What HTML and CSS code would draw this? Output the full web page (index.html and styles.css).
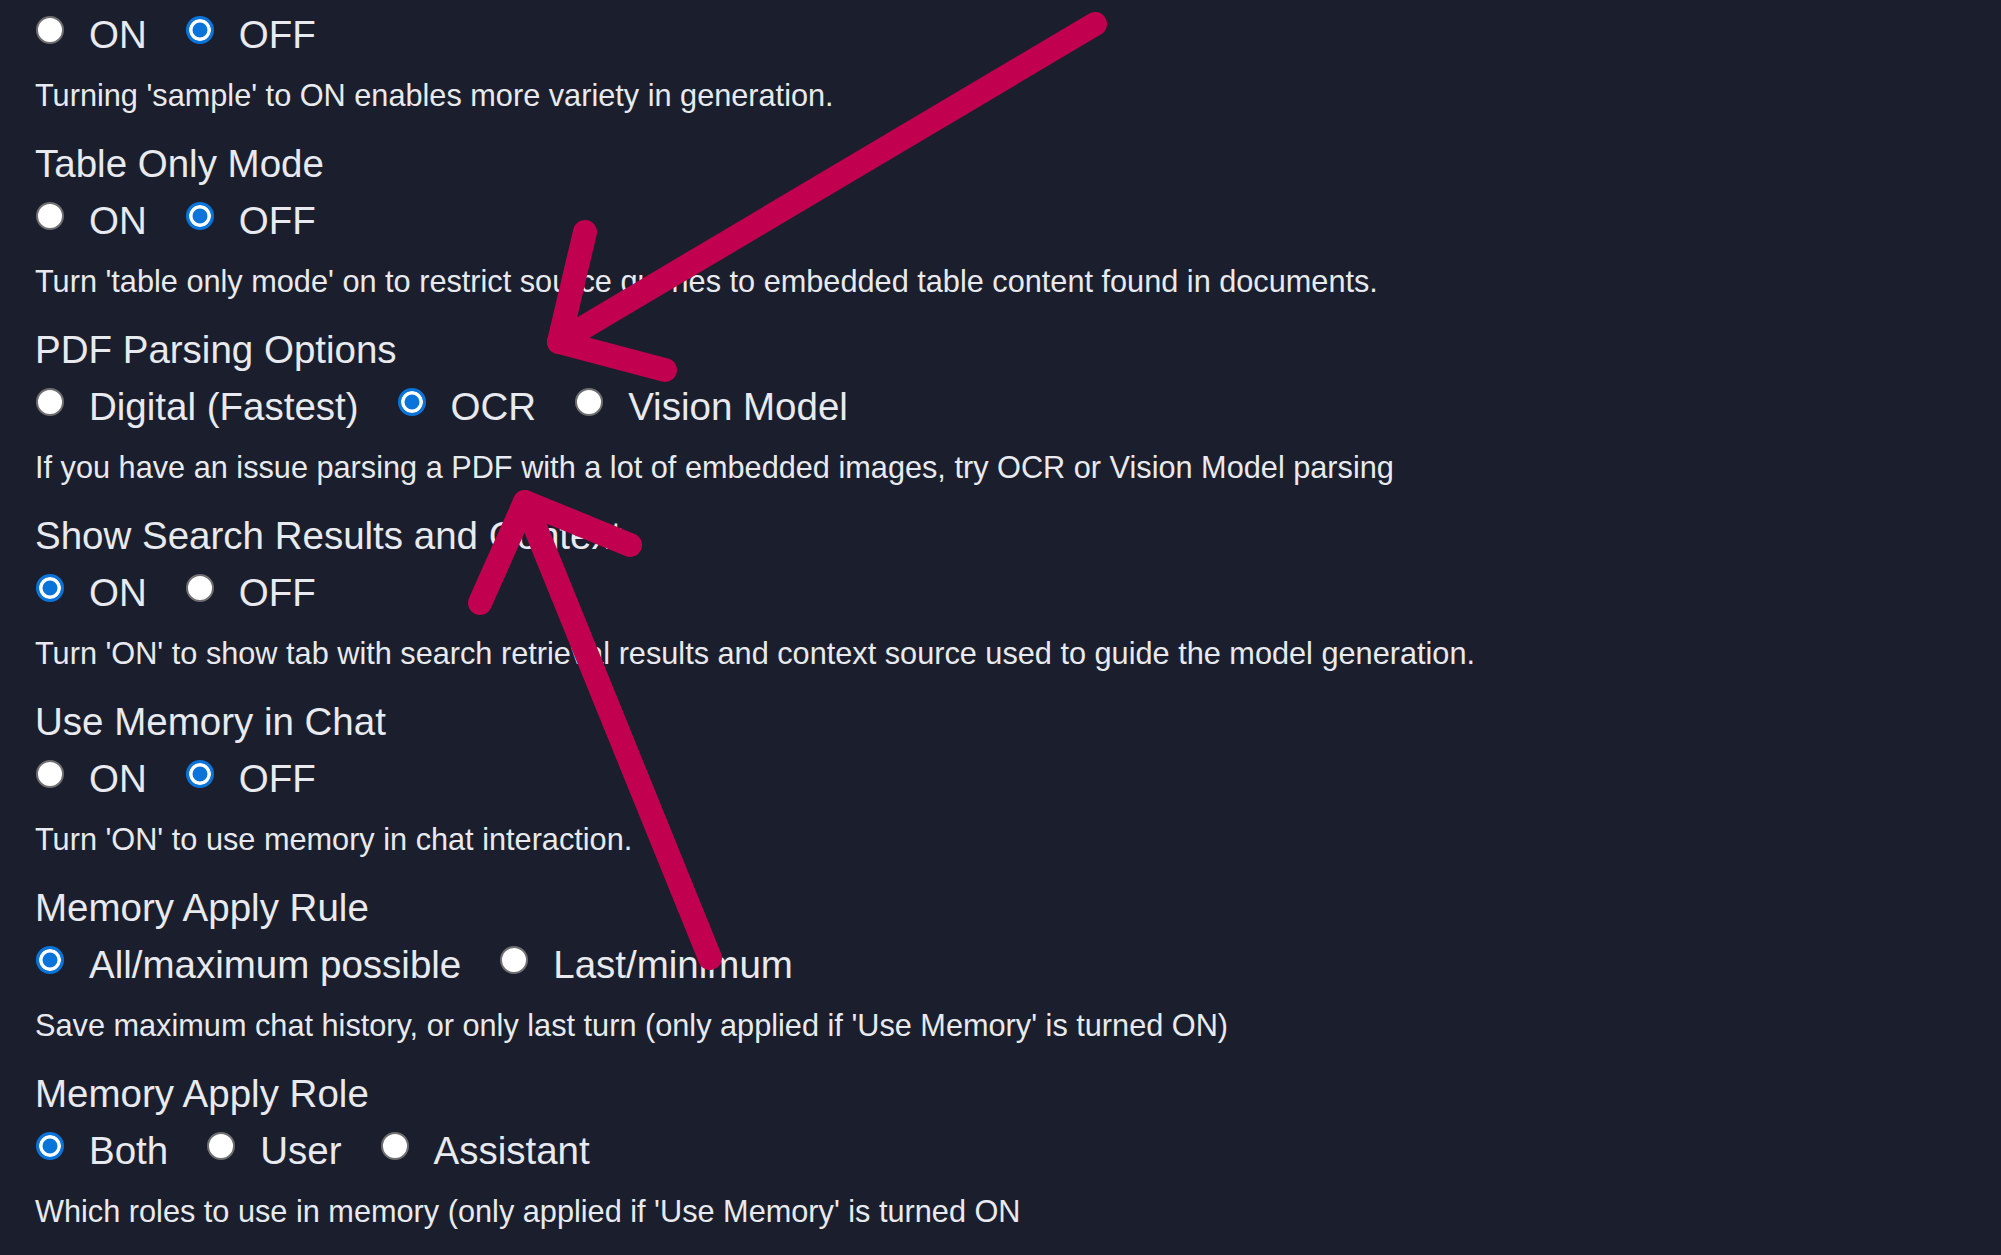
FILE: index.html
```html
<!DOCTYPE html>
<html lang="en">
<head>
<meta charset="utf-8">
<title>Settings</title>
<link rel="stylesheet" href="styles.css">
</head>
<body>
<main class="page">
  <section class="setting setting--continued">
    <div class="options">
      <label class="option"><input type="radio" name="sample"><span>ON</span></label>
      <label class="option"><input type="radio" name="sample" checked><span>OFF</span></label>
    </div>
    <p class="desc">Turning 'sample' to ON enables more variety in generation.</p>
  </section>

  <section class="setting">
    <h3 class="title">Table Only Mode</h3>
    <div class="options">
      <label class="option"><input type="radio" name="table"><span>ON</span></label>
      <label class="option"><input type="radio" name="table" checked><span>OFF</span></label>
    </div>
    <p class="desc">Turn 'table only mode' on to restrict source queries to embedded table content found in documents.</p>
  </section>

  <section class="setting">
    <h3 class="title">PDF Parsing Options</h3>
    <div class="options">
      <label class="option"><input type="radio" name="pdf"><span>Digital (Fastest)</span></label>
      <label class="option"><input type="radio" name="pdf" checked><span>OCR</span></label>
      <label class="option"><input type="radio" name="pdf"><span>Vision Model</span></label>
    </div>
    <p class="desc">If you have an issue parsing a PDF with a lot of embedded images, try OCR or Vision Model parsing</p>
  </section>

  <section class="setting">
    <h3 class="title">Show Search Results and Context</h3>
    <div class="options">
      <label class="option"><input type="radio" name="search" checked><span>ON</span></label>
      <label class="option"><input type="radio" name="search"><span>OFF</span></label>
    </div>
    <p class="desc">Turn 'ON' to show tab with search retrieval results and context source used to guide the model generation.</p>
  </section>

  <section class="setting">
    <h3 class="title">Use Memory in Chat</h3>
    <div class="options">
      <label class="option"><input type="radio" name="memory"><span>ON</span></label>
      <label class="option"><input type="radio" name="memory" checked><span>OFF</span></label>
    </div>
    <p class="desc">Turn 'ON' to use memory in chat interaction.</p>
  </section>

  <section class="setting">
    <h3 class="title">Memory Apply Rule</h3>
    <div class="options">
      <label class="option"><input type="radio" name="rule" checked><span>All/maximum possible</span></label>
      <label class="option"><input type="radio" name="rule"><span>Last/minimum</span></label>
    </div>
    <p class="desc">Save maximum chat history, or only last turn (only applied if 'Use Memory' is turned ON)</p>
  </section>

  <section class="setting">
    <h3 class="title">Memory Apply Role</h3>
    <div class="options">
      <label class="option"><input type="radio" name="role" checked><span>Both</span></label>
      <label class="option"><input type="radio" name="role"><span>User</span></label>
      <label class="option"><input type="radio" name="role"><span>Assistant</span></label>
    </div>
    <p class="desc">Which roles to use in memory (only applied if 'Use Memory' is turned ON</p>
  </section>
</main>

<svg class="annotations" width="2001" height="1255" viewBox="0 0 2001 1255" aria-hidden="true">
  <g fill="none" stroke="#c1004f" stroke-width="24" stroke-linecap="round" stroke-linejoin="round">
    <path d="M1095 24 L559 342"/>
    <path d="M585 232 L559 342 L665 370"/>
    <path d="M710 958 L525 502"/>
    <path d="M480 603 L525 502 L630 545"/>
  </g>
</svg>
</body>
</html>
```

FILE: styles.css
```css
html, body {
  margin: 0;
  padding: 0;
  background: #1b1f2d;
}

body {
  position: relative;
  width: 2001px;
  height: 1255px;
  overflow: hidden;
  color: #e8eaef;
  font-family: "Liberation Sans", Arial, sans-serif;
}

.page {
  padding: 13.5px 0 0 35px;
}

.setting {
  margin: 0;
}

.title {
  margin: 0 0 15px;
  font-size: 38.5px;
  font-weight: 400;
  line-height: 42px;
}

.options {
  display: flex;
  align-items: center;
  height: 42px;
}

.option {
  display: flex;
  align-items: center;
  gap: 25px;
  margin-right: 38px;
  font-size: 38.5px;
  line-height: 42px;
}

.option input {
  appearance: none;
  -webkit-appearance: none;
  box-sizing: border-box;
  width: 28px;
  height: 28px;
  margin: 0 0 9px 1px;
  border-radius: 50%;
  background: #ffffff;
  border: 2.5px solid #6f6f6f;
}

.option input:checked {
  background: #0a74da;
  border: 3px solid #0a74da;
  box-shadow: inset 0 0 0 3.5px #ffffff;
}

.desc {
  margin: 22px 0 29px;
  font-size: 30.7px;
  line-height: 36px;
}

.annotations {
  position: absolute;
  left: 0;
  top: 0;
  pointer-events: none;
}
```
